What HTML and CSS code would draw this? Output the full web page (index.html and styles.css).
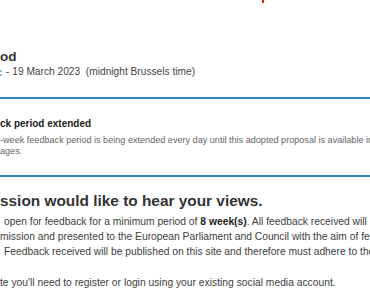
FILE: index.html
```html
<!DOCTYPE html>
<html lang="en">
<head>
  <meta charset="UTF-8" />
  <meta name="viewport" content="width=device-width, initial-scale=1.0"/>
  <title>Have your say - feedback</title>
  <link rel="stylesheet" href="styles.css">
</head>
<body>
  <div class="top-strip"><span class="red-mark"></span></div>

  <section class="period">
    <h2>od</h2>
    <p class="dates"><span class="date-icon"></span>- 19 March 2023&nbsp; (midnight Brussels time)</p>
  </section>

  <div class="notice">
    <h3>ck period extended</h3>
    <p>-week feedback period is being extended every day until this adopted proposal is available in<br>ages.</p>
  </div>

  <section class="intro">
    <h1>ssion would like to hear your views.</h1>
    <p>
      <span class="line indent">open for feedback for a minimum period of <b>8 week(s)</b>. All feedback received will</span>
      <span class="line">mission and presented to the European Parliament and Council with the aim of feeding</span>
      <span class="line indent">Feedback received will be published on this site and therefore must adhere to the</span>
    </p>
    <p>
      <span class="line">te you'll need to register or login using your existing social media account.</span>
    </p>
  </section>
</body>
</html>
```

FILE: styles.css
```css
* {
  padding: 0;
  margin: 0;
  box-sizing: border-box;
}
body {
  font-family: "Liberation Sans", Arial, sans-serif;
  color: #404040;
  background: #fff;
  white-space: nowrap;
  overflow: hidden;
  height: 100vh;
}

.top-strip {
  height: 3px;
  padding-left: 262px;
}
.red-mark {
  display: block;
  width: 2px;
  height: 3px;
  background: #e2231a;
}

.period {
  padding-bottom: 18px;
}
.period h2 {
  margin-top: 46px;
  font-size: 13.5px;
  line-height: 16px;
  font-weight: bold;
  color: #333;
}
.dates {
  font-size: 10.2px;
  line-height: 14px;
  color: #444;
}
.date-icon {
  display: inline-block;
  width: 2px;
  height: 6px;
  margin-right: 4px;
  border-top: 2px solid #8cc3ea;
  border-bottom: 2px solid #8cc3ea;
  vertical-align: -1px;
}

.notice {
  border-top: 2px solid #2f86c6;
  border-bottom: 2px solid #2f86c6;
  padding: 18px 0 18px;
}
.notice h3 {
  font-size: 10px;
  line-height: 13px;
  font-weight: bold;
  color: #222;
}
.notice p {
  margin-top: 5px;
  font-size: 9.1px;
  line-height: 11px;
  color: #666;
}

.intro h1 {
  margin-top: 15px;
  font-size: 15.4px;
  line-height: 18px;
  font-weight: bold;
  color: #333;
}
.intro p {
  margin-top: 4px;
  font-size: 10.3px;
  line-height: 15px;
}
.intro p + p {
  margin-top: 16px;
}
.intro b {
  color: #222;
}
.line {
  display: block;
}
.indent {
  padding-left: 4px;
}
```
